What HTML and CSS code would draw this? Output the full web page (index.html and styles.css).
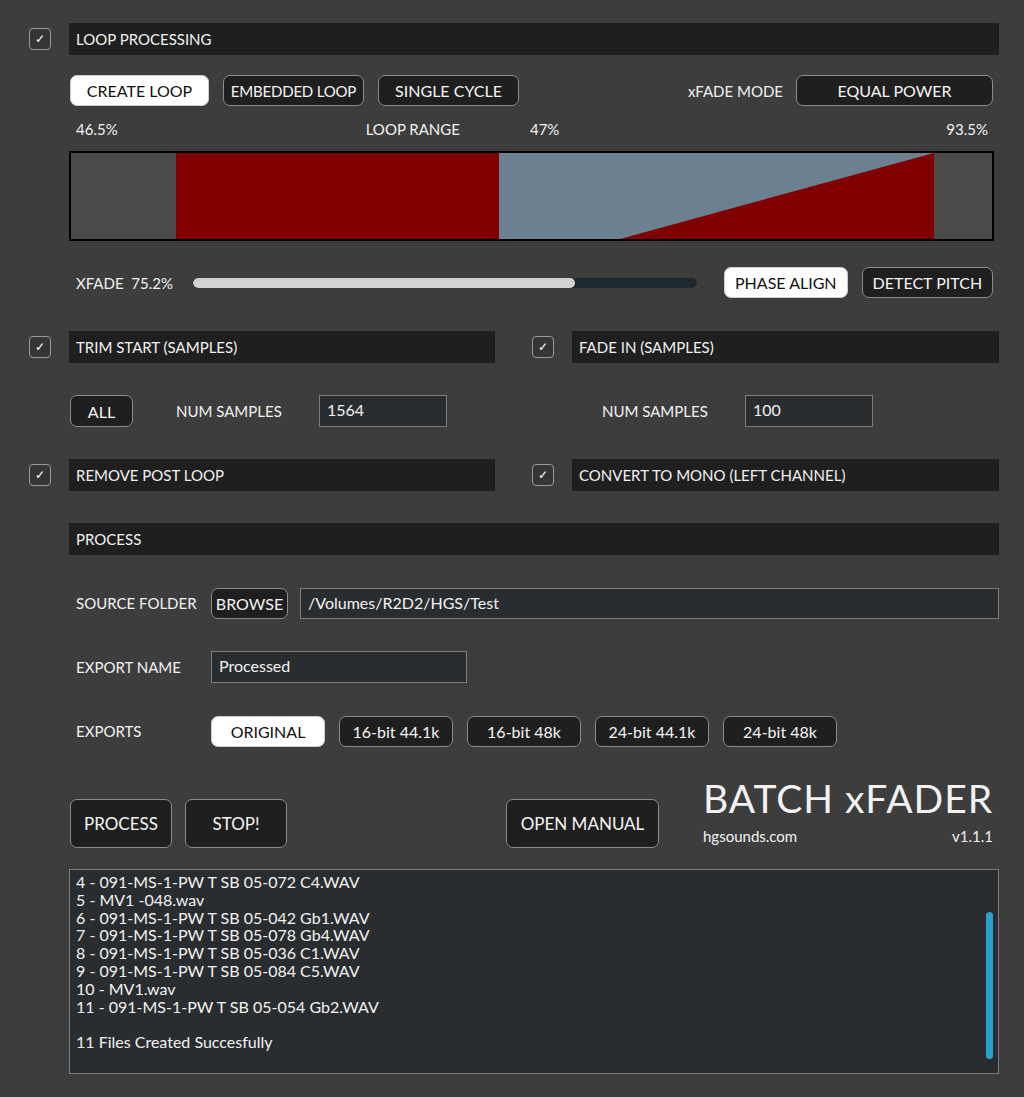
FILE: index.html
```html
<!DOCTYPE html>
<html lang="en">
<head>
    <meta charset="UTF-8">
    <meta name="viewport" content="width=device-width, initial-scale=1.0">
    <title>Batch xFader</title>
    <link rel="stylesheet" href="styles.css">
</head>
<body>

<div class="app">

    <!-- Loop processing -->
    <div class="section-row">
        <span class="check">&#10003;</span>
        <div class="header-bar">LOOP PROCESSING</div>
    </div>

    <div class="mode-row">
        <button class="btn selected wide">CREATE LOOP</button>
        <button class="btn tight">EMBEDDED LOOP</button>
        <button class="btn">SINGLE CYCLE</button>
        <span class="spacer"></span>
        <span class="label">xFADE MODE</span>
        <button class="btn mode-select">EQUAL POWER</button>
    </div>

    <div class="range-labels">
        <span class="range-start">46.5%</span>
        <span class="range-title">LOOP RANGE</span>
        <span class="range-mid">47%</span>
        <span class="spacer"></span>
        <span class="range-end">93.5%</span>
    </div>

    <div class="loop-bar">
        <svg viewBox="0 0 921 86" preserveAspectRatio="none">
            <rect x="0" y="0" width="921" height="86" fill="#4a4a4a"/>
            <rect x="105" y="0" width="323" height="86" fill="#800000"/>
            <rect x="428" y="0" width="435" height="86" fill="#6b8091"/>
            <polygon points="549,86 863,0 863,86" fill="#800000"/>
        </svg>
    </div>

    <div class="xfade-row">
        <span class="label">XFADE&nbsp;&nbsp;75.2%</span>
        <div class="slider"><div class="slider-fill" style="width: 75.8%;"></div></div>
        <button class="btn selected">PHASE ALIGN</button>
        <button class="btn">DETECT PITCH</button>
    </div>

    <!-- Trim / fade -->
    <div class="halves">
        <div class="section-row">
            <span class="check">&#10003;</span>
            <div class="header-bar">TRIM START (SAMPLES)</div>
        </div>
        <div class="section-row">
            <span class="check">&#10003;</span>
            <div class="header-bar">FADE IN (SAMPLES)</div>
        </div>
    </div>

    <div class="halves samples-row">
        <div class="samples left">
            <button class="btn all-btn">ALL</button>
            <span class="label num-label">NUM SAMPLES</span>
            <div class="field small">1564</div>
        </div>
        <div class="samples right">
            <span class="label num-label">NUM SAMPLES</span>
            <div class="field small">100</div>
        </div>
    </div>

    <div class="halves after-samples">
        <div class="section-row">
            <span class="check">&#10003;</span>
            <div class="header-bar">REMOVE POST LOOP</div>
        </div>
        <div class="section-row">
            <span class="check">&#10003;</span>
            <div class="header-bar">CONVERT TO MONO (LEFT CHANNEL)</div>
        </div>
    </div>

    <!-- Process -->
    <div class="section-row process-head">
        <span class="check blank"></span>
        <div class="header-bar">PROCESS</div>
    </div>

    <div class="form-row source-row">
        <span class="label form-label">SOURCE FOLDER</span>
        <button class="btn browse">BROWSE</button>
        <div class="field path">/Volumes/R2D2/HGS/Test</div>
    </div>

    <div class="form-row">
        <span class="label form-label">EXPORT NAME</span>
        <div class="field name">Processed</div>
    </div>

    <div class="form-row">
        <span class="label form-label">EXPORTS</span>
        <div class="exports">
            <button class="btn selected">ORIGINAL</button>
            <button class="btn">16-bit 44.1k</button>
            <button class="btn">16-bit 48k</button>
            <button class="btn">24-bit 44.1k</button>
            <button class="btn">24-bit 48k</button>
        </div>
    </div>

    <div class="action-row">
        <button class="btn big">PROCESS</button>
        <button class="btn big">STOP!</button>
        <button class="btn big manual">OPEN MANUAL</button>
        <span class="spacer"></span>
        <div class="brand">
            <div class="brand-title">BATCH xFADER</div>
            <div class="brand-sub">
                <span>hgsounds.com</span>
                <span>v1.1.1</span>
            </div>
        </div>
    </div>

    <div class="log">
        <div>4 - 091-MS-1-PW T SB 05-072 C4.WAV</div>
        <div>5 - MV1 -048.wav</div>
        <div>6 - 091-MS-1-PW T SB 05-042 Gb1.WAV</div>
        <div>7 - 091-MS-1-PW T SB 05-078 Gb4.WAV</div>
        <div>8 - 091-MS-1-PW T SB 05-036 C1.WAV</div>
        <div>9 - 091-MS-1-PW T SB 05-084 C5.WAV</div>
        <div>10 - MV1.wav</div>
        <div>11 - 091-MS-1-PW T SB 05-054 Gb2.WAV</div>
        <div>&nbsp;</div>
        <div>11 Files Created Succesfully</div>
        <span class="scrollbar"></span>
    </div>

</div>

</body>
</html>
```

FILE: styles.css
```css
body {
    margin: 0;
    background-color: #3d3d3d;
    color: #f2f2f2;
    font-family: Lato, "Open Sans", sans-serif;
    font-size: 15px;
}
.app {
    width: 1024px;
    height: 1097px;
    box-sizing: border-box;
    padding: 23px 25px 0 29px;
}
.spacer {
    flex: 1;
}
.label {
    white-space: nowrap;
}

/* section headers with check boxes */
.section-row {
    display: flex;
    align-items: center;
}
.check {
    width: 20px;
    height: 20px;
    border: 1px solid #9a9a9a;
    border-radius: 4px;
    background-color: #353535;
    color: #fff;
    font-size: 12px;
    line-height: 20px;
    text-align: center;
    margin-right: 18px;
    flex: none;
}
.check.blank {
    visibility: hidden;
}
.header-bar {
    flex: 1;
    height: 32px;
    line-height: 32px;
    background-color: #1f1f1f;
    padding-left: 7px;
}

/* buttons */
.btn {
    font-family: inherit;
    font-size: 16px;
    height: 31px;
    padding: 0 10px;
    background-color: #1f1f1f;
    color: #f5f5f5;
    border: 1px solid #8c8c8c;
    border-radius: 7px;
    white-space: nowrap;
    cursor: pointer;
}
.btn.selected {
    background-color: #fff;
    color: #111;
    border-color: #ccc;
}

.mode-row {
    display: flex;
    align-items: center;
    gap: 14px;
    margin: 20px 6px 0 41px;
}
.mode-row .btn {
    width: 141px;
    padding: 0;
}
.mode-row .wide {
    width: 139px;
}
.mode-row .tight {
    font-size: 15px;
    letter-spacing: -0.2px;
}
.mode-row .label {
    margin-right: -1px;
}
.mode-row .mode-select {
    width: 197px;
}

.range-labels {
    display: flex;
    margin: 14px 11px 0 47px;
    height: 18px;
    line-height: 18px;
}
.range-title {
    margin-left: 248px;
}
.range-mid {
    margin-left: 70px;
}

.loop-bar {
    margin: 13px 5px 0 40px;
    height: 86px;
    border: 2px solid #000;
}
.loop-bar svg {
    display: block;
    width: 100%;
    height: 100%;
}

.xfade-row {
    display: flex;
    align-items: center;
    margin: 26px 5px 0 47px;
}
.xfade-row .label {
    width: 117px;
}
.slider {
    width: 504px;
    height: 10px;
    border-radius: 5px;
    background-color: #1e292d;
    margin-right: 27px;
    overflow: hidden;
}
.slider-fill {
    height: 100%;
    border-radius: 5px;
    background-color: #d2d2d2;
}
.xfade-row .btn + .btn {
    margin-left: 14px;
}

/* two-column sections */
.halves {
    display: grid;
    grid-template-columns: 466px 467px;
    column-gap: 37px;
    margin-top: 33px;
}
.samples-row {
    margin-top: 32px;
}
.halves.after-samples {
    margin-top: 32px;
}
.samples {
    display: flex;
    align-items: center;
}
.samples.left {
    padding-left: 41px;
}
.samples.right {
    padding-left: 70px;
}
.all-btn {
    width: 63px;
    height: 32px;
    margin-right: 43px;
}
.num-label {
    width: 143px;
}
.field {
    height: 30px;
    line-height: 28px;
    box-sizing: border-box;
    background-color: #2a2d30;
    border: 1px solid #7d7d7d;
    padding-left: 7px;
    font-size: 16px;
}
.field.small {
    width: 128px;
    height: 32px;
}

/* process */
.process-head {
    margin-top: 32px;
}
.form-row {
    display: flex;
    align-items: center;
    margin: 32px 0 0 47px;
    height: 32px;
}
.source-row {
    margin-top: 32px;
}
.form-label {
    width: 135px;
}
.browse {
    width: 77px;
    padding: 0;
    margin-right: 12px;
}
.field.path {
    flex: 1;
    height: 31px;
}
.field.name {
    width: 256px;
    height: 32px;
}
.exports {
    display: flex;
    gap: 14px;
}
.exports .btn {
    width: 114px;
    padding: 0;
}

.action-row {
    display: flex;
    align-items: flex-start;
    margin: 31px 6px 0 41px;
}
.btn.big {
    height: 49px;
    width: 102px;
    margin: 21px 13px 0 0;
    font-size: 17px;
}
.btn.manual {
    width: 153px;
    margin-left: 206px;
}
.brand {
    flex: none;
    width: 290px;
    white-space: nowrap;
}
.brand-title {
    font-size: 39px;
    line-height: 40px;
    letter-spacing: 1px;
}
.brand-sub {
    display: flex;
    justify-content: space-between;
    margin-top: 9px;
    line-height: 18px;
    font-size: 15px;
}

.log {
    position: relative;
    margin: 21px 0 0 40px;
    height: 205px;
    box-sizing: border-box;
    background-color: #2a2d30;
    border: 1px solid #7d7d7d;
    padding: 3px 6px;
    font-size: 16px;
    line-height: 17.8px;
}
.scrollbar {
    position: absolute;
    right: 5px;
    top: 42px;
    width: 7px;
    height: 147px;
    border-radius: 4px;
    background-color: #2a9fd0;
}
```
